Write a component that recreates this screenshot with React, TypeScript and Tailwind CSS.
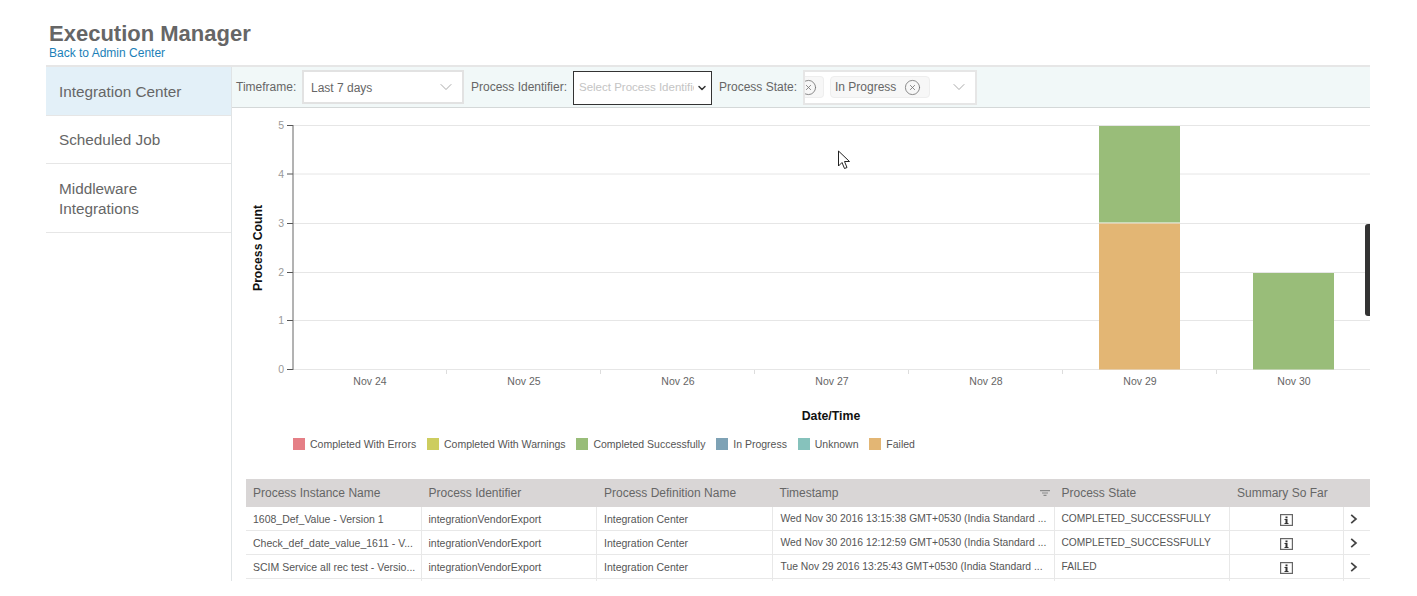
import { ChevronDown, CircleX } from "lucide-react";

const font = "font-['Liberation_Sans',Arial,sans-serif]";

const sideItems = [
  { label: "Integration Center", active: true },
  { label: "Scheduled Job", active: false },
  { label: "Middleware Integrations", active: false },
];

const legend = [
  { label: "Completed With Errors", color: "bg-[#e57f86]" },
  { label: "Completed With Warnings", color: "bg-[#cdcd5f]" },
  { label: "Completed Successfully", color: "bg-[#99bd79]" },
  { label: "In Progress", color: "bg-[#7ea2b5]" },
  { label: "Unknown", color: "bg-[#86c2bc]" },
  { label: "Failed", color: "bg-[#e3b674]" },
];

const rows = [
  {
    name: "1608_Def_Value - Version 1",
    time: "Wed Nov 30 2016 13:15:38 GMT+0530 (India Standard ...",
    state: "COMPLETED_SUCCESSFULLY",
  },
  {
    name: "Check_def_date_value_1611 - V...",
    time: "Wed Nov 30 2016 12:12:59 GMT+0530 (India Standard ...",
    state: "COMPLETED_SUCCESSFULLY",
  },
  {
    name: "SCIM Service all rec test - Versio...",
    time: "Tue Nov 29 2016 13:25:43 GMT+0530 (India Standard ...",
    state: "FAILED",
  },
];

const columns = "grid grid-cols-[175.5px_175.5px_175.5px_282px_175.5px_113.5px_27px]";

const days = ["Nov 24", "Nov 25", "Nov 26", "Nov 27", "Nov 28", "Nov 29", "Nov 30"];

function Chart() {
  // svg origin sits at page x=233, y=108
  const left = 60;
  const step = 154;
  const ys = [261.5, 212.5, 164.5, 115.5, 66, 17.5];
  return (
    <svg width="1137" height="318" className="ml-px block">
      {ys.map((y, i) => (
        <g key={i}>
          <line x1={left} x2="1137" y1={y} y2={y} stroke="#e6e6e6" />
          <line x1={left - 6} x2={left} y1={y} y2={y} stroke="#555" />
          <text x={left - 9} y={y + 3.5} textAnchor="end" fontSize="10.5" fill="#999">
            {i}
          </text>
        </g>
      ))}
      <line x1={left} x2={left} y1="17" y2="262" stroke="#666" />
      {days.map((d, i) => (
        <g key={d}>
          <line
            x1={left + step * (i + 1) - 0.5}
            x2={left + step * (i + 1) - 0.5}
            y1="262"
            y2="266"
            stroke="#ddd"
          />
          <text x={left + 77 + step * i} y="277" textAnchor="middle" fontSize="10.5" fill="#666">
            {d}
          </text>
        </g>
      ))}
      <rect x="866" y="18" width="81" height="96.5" fill="#99bd79" />
      <rect x="866" y="115.5" width="81" height="146" fill="#e3b674" />
      <rect x="1020" y="165" width="81" height="96.5" fill="#99bd79" />
      <text x="598" y="312" textAnchor="middle" fontSize="12.3" fontWeight="700" fill="#111">
        Date/Time
      </text>
      <text
        transform="translate(29 140) rotate(-90)"
        textAnchor="middle"
        fontSize="12.2"
        fontWeight="700"
        fill="#111"
      >
        Process Count
      </text>
    </svg>
  );
}

function InfoIcon() {
  return (
    <svg width="13" height="12" viewBox="0 0 13 12" className="block">
      <rect x="0.6" y="0.6" width="11.8" height="10.8" fill="none" stroke="#666" strokeWidth="1.2" />
      <rect x="5.5" y="2.5" width="2" height="1.8" fill="#333" />
      <path d="M4.5 5h3v4h1v1h-4V9h1V6h-1z" fill="#333" />
    </svg>
  );
}

function SortIcon() {
  return (
    <svg width="10" height="6" viewBox="0 0 10 6" className="block">
      <path d="M0 .6h10M2 3h6M3.5 5.4h3" stroke="#8a8a8a" strokeWidth="1.2" fill="none" />
    </svg>
  );
}

function RowArrow() {
  return (
    <svg width="8" height="10" viewBox="0 0 8 10" className="block">
      <path d="M1.2 .8 6 5l-4.8 4.2" stroke="#444" strokeWidth="1.7" fill="none" />
    </svg>
  );
}

export default function App() {
  return (
    <div className={`relative h-[596px] w-[1417px] overflow-hidden bg-white ${font}`}>
      <div className="ml-[46px] w-[1324px]">
        {/* Header */}
        <div className="h-[65px] pl-[3px] pt-[21px]">
          <h1 className="text-[22px] leading-[25px] font-bold text-[#666]">Execution Manager</h1>
          <a className="block text-[12px] leading-[14px] text-[#1b7fb8]">Back to Admin Center</a>
        </div>

        <div className="flex border-t-2 border-[#e6e6e6]">
          {/* Side nav */}
          <div className="w-[185px] shrink-0">
            {sideItems.map((item) => (
              <div
                key={item.label}
                className={`border-b border-[#e6e6e6] pb-[12.5px] pl-[13px] pr-[40px] pt-[14.5px] text-[15.3px] leading-[20.5px] text-[#666] ${
                  item.active ? "bg-[#e3f0f8]" : "bg-white"
                }`}
              >
                {item.label}
              </div>
            ))}
          </div>

          {/* Main */}
          <div className="h-[514px] w-[1139px] overflow-hidden border-l border-[#e0e4e6]">
            {/* Filters */}
            <div className="flex h-[41px] items-center border-b border-[#d4d8d8] bg-[#f1f8f8] pl-[4px] text-[12px] text-[#666]">
              <span className="-mt-px w-[66px]">Timeframe:</span>
              <div className="flex h-[34px] w-[162px] items-center justify-between border-2 border-[#e2e2e2] bg-white pl-[7px] pr-[6px] text-[#666]">
                <span className="mt-px">Last 7 days</span>
                <ChevronDown className="h-5 w-5 text-[#999]" strokeWidth={1} />
              </div>
              <span className="-mt-px ml-[7px] w-[102px]">Process Identifier:</span>
              <div className="mt-[2px] flex h-[34px] w-[139px] items-center border border-[#333] bg-white pl-[5px] text-[11.5px] text-[#c4c4c4]">
                <span className="w-[115px] overflow-hidden whitespace-nowrap">Select Process Identifier</span>
                <ChevronDown className="ml-[2px] h-3 w-3 text-[#333]" strokeWidth={3} />
              </div>
              <span className="-mt-px ml-[7px] w-[84px]">Process State:</span>
              <div className="flex h-[35px] w-[174px] items-center overflow-hidden border-2 border-[#e6e6e6] bg-white">
                <div className="flex h-[22px] w-[19px] shrink-0 items-center justify-end overflow-hidden rounded-r-sm border border-l-0 border-[#eee] bg-[#f7f7f7] pr-[6.5px]">
                  <CircleX className="h-[17px] w-[17px] shrink-0 text-[#777]" strokeWidth={1.2} />
                </div>
                <div className="ml-[6px] flex h-[22px] w-[100px] shrink-0 items-center rounded-sm border border-[#eee] bg-[#f7f7f7] pl-[4px]">
                  <span className="-mt-px">In Progress</span>
                  <CircleX className="ml-[8px] h-[17px] w-[17px] text-[#777]" strokeWidth={1.2} />
                </div>
                <ChevronDown className="ml-[19px] h-5 w-5 shrink-0 text-[#999]" strokeWidth={1} />
              </div>
            </div>

            <Chart />

            {/* Legend */}
            <div className="ml-px flex h-[40px] items-start pl-[60px] pt-[12px] text-[10.5px] leading-[12px] text-[#555]">
              {legend.map((l) => (
                <div key={l.label} className="mr-[10.8px] flex items-center gap-[5px]">
                  <span className={`h-[12px] w-[12px] ${l.color}`} />
                  <span>{l.label}</span>
                </div>
              ))}
            </div>

            {/* Table */}
            <div className="ml-[14px] mt-[13px] h-[102px] overflow-hidden">
              <div className={`${columns} h-[28px] items-center bg-[#d9d6d6] text-[12px] text-[#666]`}>
                <span className="pl-[7px]">Process Instance Name</span>
                <span className="pl-[7px]">Process Identifier</span>
                <span className="pl-[7px]">Process Definition Name</span>
                <span className="flex items-center justify-between pl-[7px] pr-[5px]">
                  Timestamp
                  <SortIcon />
                </span>
                <span className="pl-[7px]">Process State</span>
                <span className="pl-[7px]">Summary So Far</span>
                <span />
              </div>
              {rows.map((r) => (
                <div
                  key={r.time}
                  className={`${columns} h-[24px] border-b border-[#e8e8e8] text-[10.5px] leading-[24px] text-[#555]`}
                >
                  <span className="whitespace-nowrap border-r border-[#e8e8e8] pl-[7px]">{r.name}</span>
                  <span className="whitespace-nowrap border-r border-[#e8e8e8] pl-[7px]">integrationVendorExport</span>
                  <span className="whitespace-nowrap border-r border-[#e8e8e8] pl-[7px]">Integration Center</span>
                  <span className="whitespace-nowrap border-r border-[#e8e8e8] pl-[8px] text-[10.35px]">{r.time}</span>
                  <span className="whitespace-nowrap border-r border-[#e8e8e8] pl-[7px] text-[10.2px]">{r.state}</span>
                  <span className="flex items-center justify-center border-r border-[#e8e8e8] pt-px">
                    <InfoIcon />
                  </span>
                  <span className="flex items-center pl-[6px]">
                    <RowArrow />
                  </span>
                </div>
              ))}
              <div className={`${columns} h-[24px]`}>
                <span className="border-r border-[#e8e8e8]" />
                <span className="border-r border-[#e8e8e8]" />
                <span className="border-r border-[#e8e8e8]" />
                <span className="border-r border-[#e8e8e8]" />
                <span className="border-r border-[#e8e8e8]" />
                <span className="border-r border-[#e8e8e8]" />
                <span />
              </div>
            </div>
          </div>
        </div>
      </div>

      {/* Overlays: dark scroll handle and mouse pointer */}
      <div className="absolute left-[1365px] top-[224px] h-[92px] w-[5px] rounded-l-[3px] bg-[#333]" />
      <svg className="absolute left-[837px] top-[150px]" width="14" height="20" viewBox="0 0 14 20">
        <path d="M1.5 1v15l3.5-3.5 2.5 6 2.5-1-2.5-6h5z" fill="#fff" stroke="#222" strokeWidth="1" />
      </svg>
    </div>
  );
}
